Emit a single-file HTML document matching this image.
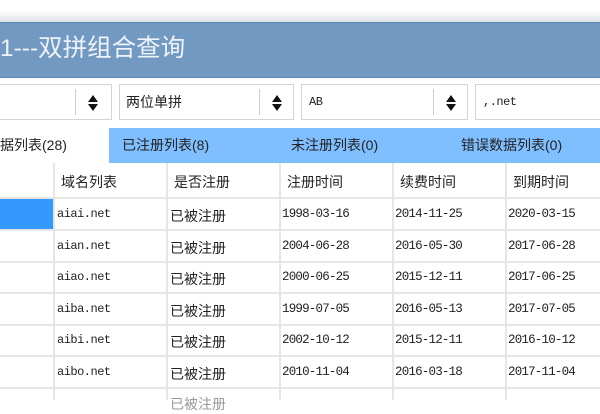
<!DOCTYPE html>
<html><head><meta charset="utf-8"><style>
*{margin:0;padding:0;box-sizing:border-box}
body{width:600px;height:400px;overflow:hidden;background:#fff;position:relative;font-family:"Liberation Sans","Noto Sans CJK SC",sans-serif}
.top{position:absolute;left:0;top:0;width:600px;height:22px;background:linear-gradient(#fff 0,#fff 10px,#dde3ea 22px)}
.title{position:absolute;left:0;top:22px;width:600px;height:56px;background:#7299c1;border-top:1px solid #5f86ad;border-bottom:1px solid #5f86ad;color:#eef3f8;font-size:24.5px;line-height:52px;padding-left:0}
.box{position:absolute;top:84px;height:36px;border:1px solid #d4d4d4;background:#fff;font-size:14px;line-height:34px;color:#222}
.sep{position:absolute;top:4px;bottom:4px;width:1px;background:#ccc}
.arr{position:absolute;top:10px;width:10px;height:16px}
.tabs{position:absolute;top:128px;left:0;width:600px;height:35px;background:#80bfff}
.tab{position:absolute;top:0;height:35px;line-height:35px;font-size:14px;color:#222}
.cell{position:absolute;font-size:14px;color:#222;white-space:nowrap}
.mono{font-family:"Liberation Mono","Noto Sans CJK SC",monospace;font-size:12px;letter-spacing:-0.5px}
.d{font-family:"Liberation Mono",monospace;font-size:12.5px;letter-spacing:-0.8px}
.z{font-size:14px}
.vl{position:absolute;width:2px;background:#e6e6e6;top:163px;height:237px}
.hl{position:absolute;left:0;width:600px;height:2px;background:#e6e6e6}
</style></head><body>
<div class="top"></div>
<div class="title">1---双拼组合查询</div>

<div class="box" style="left:-2px;width:114px"><div class="sep" style="left:76px"></div><svg class="arr" style="left:89px" viewBox="0 0 10 16"><path d="M5 0L10 7H0Z M5 16L10 9H0Z" fill="#111"/></svg></div>
<div class="box" style="left:119px;width:175px;padding-left:6px">两位单拼<div class="sep" style="left:139px"></div><svg class="arr" style="left:152px" viewBox="0 0 10 16"><path d="M5 0L10 7H0Z M5 16L10 9H0Z" fill="#111"/></svg></div>
<div class="box mono" style="left:301px;width:167px;padding-left:7px">AB<div class="sep" style="left:131px"></div><svg class="arr" style="left:144px" viewBox="0 0 10 16"><path d="M5 0L10 7H0Z M5 16L10 9H0Z" fill="#111"/></svg></div>
<div class="box mono" style="left:475px;width:130px;padding-left:7px">,.net</div>

<div class="tabs">
<div class="tab" style="left:0;width:109px;background:#fff">据列表(28)</div>
<div class="tab" style="left:122px">已注册列表(8)</div>
<div class="tab" style="left:291px">未注册列表(0)</div>
<div class="tab" style="left:461px">错误数据列表(0)</div>
</div>

<div style="position:absolute;left:0;top:198px;width:53px;height:32px;background:#3399ff"></div>
<div class="vl" style="left:53px"></div><div class="vl" style="left:166px"></div><div class="vl" style="left:279px"></div><div class="vl" style="left:392px"></div><div class="vl" style="left:505px"></div>
<div class="hl" style="top:197px"></div><div class="hl" style="top:229px"></div><div class="hl" style="top:261px"></div><div class="hl" style="top:292px"></div><div class="hl" style="top:324px"></div><div class="hl" style="top:355px"></div><div class="hl" style="top:387px"></div>

<div class="cell" style="left:61px;top:172px">域名列表</div>
<div class="cell" style="left:174px;top:172px">是否注册</div>
<div class="cell" style="left:287px;top:172px">注册时间</div>
<div class="cell" style="left:400px;top:172px">续费时间</div>
<div class="cell" style="left:513px;top:172px">到期时间</div>

<div class="cell mono" style="left:57px;top:207px">aiai.net</div><div class="cell z" style="left:170px;top:206px">已被注册</div><div class="cell d" style="left:282px;top:207px">1998-03-16</div><div class="cell d" style="left:395px;top:207px">2014-11-25</div><div class="cell d" style="left:508px;top:207px">2020-03-15</div>
<div class="cell mono" style="left:57px;top:239px">aian.net</div><div class="cell z" style="left:170px;top:238px">已被注册</div><div class="cell d" style="left:282px;top:239px">2004-06-28</div><div class="cell d" style="left:395px;top:239px">2016-05-30</div><div class="cell d" style="left:508px;top:239px">2017-06-28</div>
<div class="cell mono" style="left:57px;top:270px">aiao.net</div><div class="cell z" style="left:170px;top:269px">已被注册</div><div class="cell d" style="left:282px;top:270px">2000-06-25</div><div class="cell d" style="left:395px;top:270px">2015-12-11</div><div class="cell d" style="left:508px;top:270px">2017-06-25</div>
<div class="cell mono" style="left:57px;top:302px">aiba.net</div><div class="cell z" style="left:170px;top:301px">已被注册</div><div class="cell d" style="left:282px;top:302px">1999-07-05</div><div class="cell d" style="left:395px;top:302px">2016-05-13</div><div class="cell d" style="left:508px;top:302px">2017-07-05</div>
<div class="cell mono" style="left:57px;top:333px">aibi.net</div><div class="cell z" style="left:170px;top:332px">已被注册</div><div class="cell d" style="left:282px;top:333px">2002-10-12</div><div class="cell d" style="left:395px;top:333px">2015-12-11</div><div class="cell d" style="left:508px;top:333px">2016-10-12</div>
<div class="cell mono" style="left:57px;top:365px">aibo.net</div><div class="cell z" style="left:170px;top:364px">已被注册</div><div class="cell d" style="left:282px;top:365px">2010-11-04</div><div class="cell d" style="left:395px;top:365px">2016-03-18</div><div class="cell d" style="left:508px;top:365px">2017-11-04</div>
<div class="cell z" style="left:170px;top:394px;color:#999">已被注册</div>
</body></html>
